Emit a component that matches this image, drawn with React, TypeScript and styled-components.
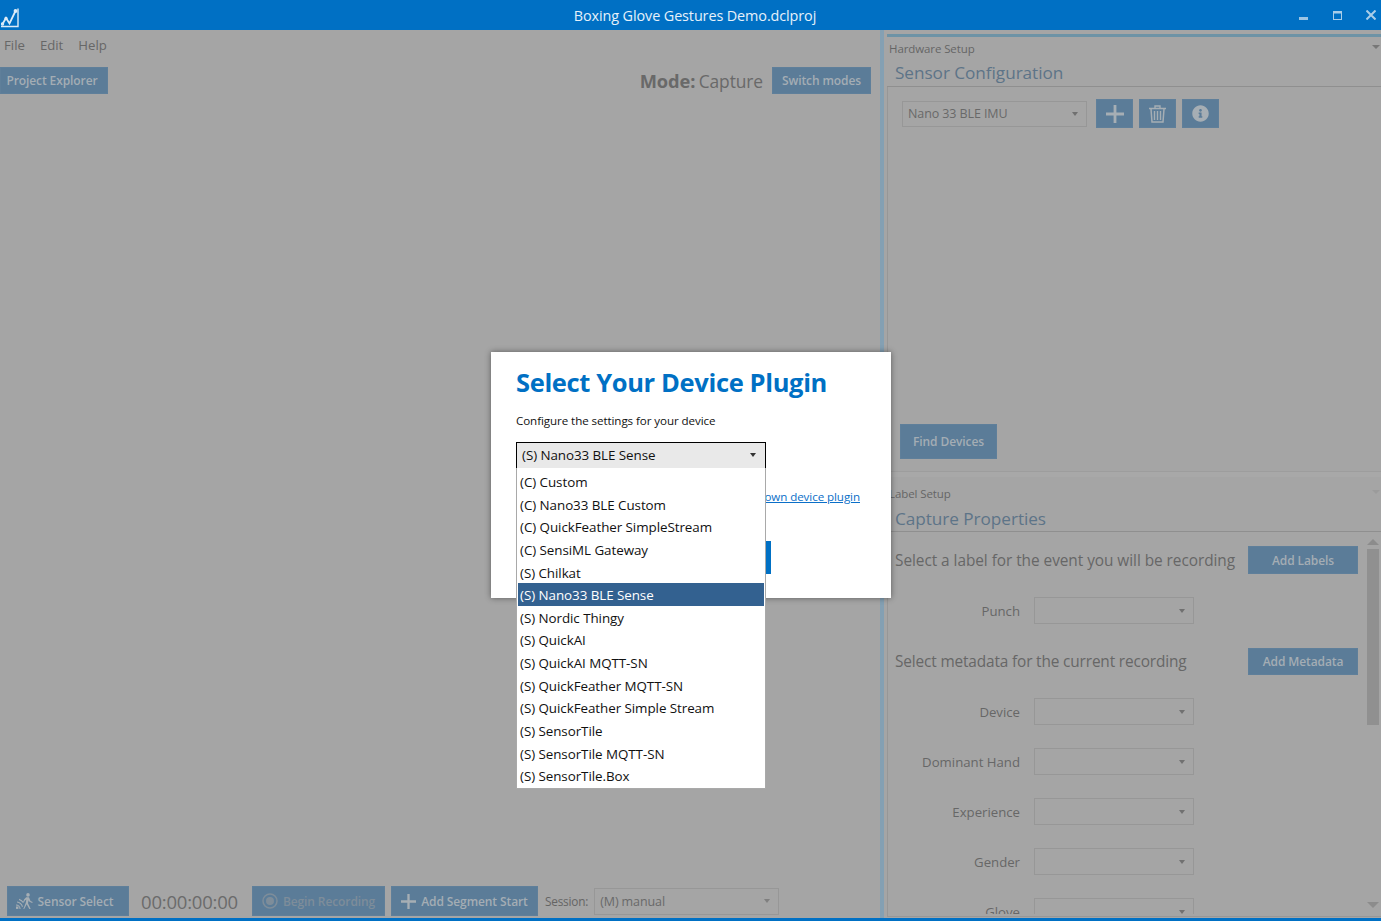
import React from "react";
import styled, { createGlobalStyle } from "styled-components";
import { FaInfoCircle } from "react-icons/fa";

const Global = createGlobalStyle`
  html, body { margin: 0; padding: 0; height: 100%; background: #a5a5a5; overflow: hidden; }
  body { font-family: "Open Sans", "Noto Sans", "Liberation Sans", sans-serif; }
  * { box-sizing: border-box; }
`;

const Window = styled.div`
  width: 1381px; height: 921px; display: flex; flex-direction: column; position: relative;
  background: #a5a5a5; color: #6b6b6b; overflow: hidden; border-bottom: 3px solid #0070c4;
`;
const TitleBar = styled.header`
  height: 30px; flex: none; background: #0070c4; display: grid; grid-template-columns: 1fr auto 1fr; align-items: center;
  color: #e6f1fa; font-size: 14.4px; letter-spacing: -0.1px; padding-left: 1px;
`;
const TitleText = styled.span`
  margin-left: 8px;
`;
const WinControls = styled.div`
  display: flex; justify-content: flex-end; align-items: center; gap: 24px; padding-right: 5px;
`;
const Body = styled.div`
  flex: 1; display: flex; min-height: 0;
`;
const LeftPane = styled.main`
  width: 880px; flex: none; display: flex; flex-direction: column; min-height: 0;
`;
const MenuBar = styled.nav`
  height: 30px; flex: none; display: flex; align-items: center; gap: 15px; padding: 0 0 0 4px; font-size: 13.2px; color: #676767;
`;
const TopRow = styled.div`
  display: flex; justify-content: space-between; align-items: center; margin-top: 7px; padding-right: 9px;
`;
const Btn = styled.button<{ $w?: number; $h?: number; $muted?: boolean; $pr?: number }>`
  display: inline-flex; align-items: center; justify-content: center; gap: 5px; padding: 0 ${(p) => p.$pr ?? 0}px 0 0;
  width: ${(p) => (p.$w ? p.$w + "px" : "auto")}; height: ${(p) => p.$h ?? 27}px;
  background: #5b7c98; border: 1px solid #5f7f9a; color: ${(p) => (p.$muted ? "#7e8d9a" : "#a4adb4")};
  font: 600 12px "Open Sans", "Noto Sans", sans-serif; letter-spacing: -0.1px;
`;
const ModeWrap = styled.div`
  display: flex; align-items: center; gap: 9px;
`;
const ModeText = styled.div`
  font-size: 17.4px; color: #696969; letter-spacing: -0.1px; word-spacing: -1px;
  b { font-weight: 700; font-size: 18.3px; }
`;
const Spacer = styled.div`
  flex: 1;
`;
const BottomBar = styled.div`
  display: flex; align-items: center; padding: 0 0 2px 7px; height: 32px; flex: none;
`;
const Timer = styled.span`
  font: 18.5px "Open Sans", sans-serif; color: #6b6b6b; width: 123px; padding-left: 12px; letter-spacing: -0.2px; white-space: nowrap;
`;
const BarGap = styled.span`
  width: 6px;
`;
const SessionLabel = styled.span`
  font-size: 11.8px; color: #646464; margin: 0 6px 0 7px; letter-spacing: -0.2px;
`;
const Combo = styled.div<{ $w: number; $h?: number }>`
  width: ${(p) => p.$w}px; height: ${(p) => p.$h ?? 27}px; display: flex; align-items: center; justify-content: space-between;
  border: 1px solid #979797;
  padding: 0 8px 0 5px; font-size: 12.5px; color: #696969; flex: none; letter-spacing: -0.1px;
`;
const Caret = styled.span<{ $c?: string }>`
  width: 0; height: 0; border-left: 3.5px solid transparent; border-right: 3.5px solid transparent;
  border-top: 4px solid ${(p) => p.$c ?? "#707070"};
`;
const Splitter = styled.div`
  width: 4px; flex: none; background: #84a0b3;
`;
const RightPane = styled.aside`
  flex: 1; display: flex; flex-direction: column; padding-left: 3px; min-width: 0; min-height: 0;
`;
const TopSection = styled.section`
  height: 441px; flex: none; display: flex; flex-direction: column; padding-top: 4px;
`;
const AccentLine = styled.div`
  height: 3px; background: #6d93a6; flex: none;
`;
const SectionHead = styled.div<{ $mt?: number }>`
  position: relative; height: 17px; margin-top: ${(p) => p.$mt ?? 3}px; padding-left: 2px; font-size: 11.5px; color: #656565; line-height: 17px; letter-spacing: -0.1px; flex: none;
`;
const HeadCaret = styled.span<{ $c?: string }>`
  position: absolute; right: 1px; top: 5px; width: 0; height: 0; border-left: 4px solid transparent; border-right: 4px solid transparent; border-top: 4px solid ${(p) => p.$c ?? "#777"};
`;
const SectionTitle = styled.h2<{ $pt: number }>`
  margin: 0; height: 30px; padding: ${(p) => p.$pt}px 0 0 8px; font-size: 17.2px; font-weight: 400; color: #5d7488; line-height: 28px; flex: none; letter-spacing: -0.05px; border-bottom: 1px solid #8f8f8f;
`;
const ConfigBody = styled.div`
  flex: 1; border-left: 1px solid #979797; padding: 12px 0 12px 12px; display: flex; flex-direction: column; justify-content: space-between;
`;
const ConfigRow = styled.div`
  display: flex; align-items: center; gap: 6px; padding-left: 2px;
`;
const IconBtn = styled(Btn)<{ $first?: boolean }>`
  color: #a6aeb4; margin-left: ${(p) => (p.$first ? 3 : 0)}px;
`;
const Grip = styled.div`
  height: 6px; flex: none; background: #a8a8a8; border-top: 1px solid #9d9d9d;
`;
const BottomSection = styled.section`
  flex: 1; display: flex; flex-direction: column; min-height: 0; padding-bottom: 1px;
`;
const PropsBody = styled.div`
  flex: 1; min-height: 0; border-left: 1px solid #979797; display: flex; overflow: hidden; border-bottom: 1px solid #979797;
`;
const PropsScroll = styled.div`
  flex: 1; padding: 14px 7px 0 7px; margin-bottom: 2px; overflow: hidden; min-width: 0;
`;
const HeadRow = styled.div<{ $mb: number; $ls?: number }>`
  display: flex; justify-content: space-between; align-items: center; height: 28px; margin-bottom: ${(p) => p.$mb}px;
  font-size: 15.4px; color: #676767; letter-spacing: ${(p) => p.$ls ?? -0.05}px;
`;
const FieldRow = styled.div`
  display: grid; grid-template-columns: 125px 160px; column-gap: 14px; align-items: center; height: 27px; margin-bottom: 23px;
  font-size: 13.2px; color: #676767; text-align: right;
`;
const Scrollbar = styled.div`
  width: 16px; flex: none; display: flex; flex-direction: column; align-items: center; padding-top: 7px;
`;
const ScrollUp = styled.span`
  width: 0; height: 0; border-left: 6px solid transparent; border-right: 6px solid transparent; border-bottom: 6px solid #8c8c8c;
`;
const ScrollThumb = styled.div`
  width: 12px; height: 176px; margin-top: 4px; background: #909090;
`;
const ScrollDown = styled.span`
  margin-top: auto; margin-bottom: 8px; width: 0; height: 0; border-left: 6px solid transparent; border-right: 6px solid transparent; border-top: 6px solid #8c8c8c;
`;

const Dialog = styled.div`
  position: absolute; left: 491px; top: 352px; width: 400px; height: 246px; background: #fff; padding: 12px 25px 0;
  box-shadow: 0 0 6px rgba(0,0,0,0.45); display: flex; flex-direction: column;
`;
const DialogTitle = styled.h1`
  margin: 0; font-size: 25.5px; line-height: 37px; font-weight: 700; color: #0070c4; letter-spacing: -0.36px; white-space: nowrap;
`;
const DialogText = styled.p`
  margin: 11px 0 0; font-size: 11.6px; line-height: 18px; color: #111; letter-spacing: -0.08px;
`;
const SelectWrap = styled.div`
  position: relative; width: 250px; margin-top: 12px; height: 27px; flex: none;
`;
const SelectBox = styled.div`
  height: 27px; background: #e9e9e9; border: 1px solid #000; display: flex; align-items: center; justify-content: space-between;
  padding: 0 9px 1px 5px; font-size: 13.4px; color: #111; letter-spacing: -0.07px;
`;
const List = styled.ul`
  position: absolute; left: 0; top: 26px; width: 250px; margin: 0; padding: 2px 1px 0; list-style: none; background: #fff; border: 1px solid #a9a9a9; border-top: 0; height: 321px; z-index: 3;
`;
const Item = styled.li<{ $sel?: boolean }>`
  height: 22.65px; line-height: 24px; padding-left: 2px; font-size: 13.4px; letter-spacing: -0.06px; white-space: nowrap;
  color: ${(p) => (p.$sel ? "#fff" : "#111")}; background: ${(p) => (p.$sel ? "#336190" : "transparent")};
`;
const DeviceLink = styled.a`
  align-self: flex-end; margin: 20px 6px 0 0; font-size: 11.6px; line-height: 16px; color: #0b6fc8; text-decoration: underline; letter-spacing: -0.08px;
`;
const PrimaryBtn = styled.div`
  align-self: flex-start; margin: 36px 0 0 100px; width: 155px; height: 33px; background: #0070c4;
`;

const items = ["(C) Custom","(C) Nano33 BLE Custom","(C) QuickFeather SimpleStream","(C) SensiML Gateway","(S) Chilkat","(S) Nano33 BLE Sense","(S) Nordic Thingy","(S) QuickAI","(S) QuickAI MQTT-SN","(S) QuickFeather MQTT-SN","(S) QuickFeather Simple Stream","(S) SensorTile","(S) SensorTile MQTT-SN","(S) SensorTile.Box"];
const fieldsA = ["Device","Dominant Hand","Experience","Gender","Glove"];

const Logo = () => (
  <svg width="20" height="24" viewBox="0 0 20 24" fill="none" stroke="#dcebf7" strokeWidth="1.4" style={{ display: "block", marginTop: 1 }}>
    <path d="M17 4.5V22.5H0" />
    <path d="M1.5 20 5 14l3.5 5.5L14.5 7" strokeWidth="1.8" />
    <circle cx="1.5" cy="20" r="1" fill="#dcebf7" />
    <circle cx="5" cy="14.5" r="1" fill="#dcebf7" />
    <circle cx="14.5" cy="7" r="1.2" fill="#dcebf7" />
  </svg>
);
const Plus = ({ s = 18, c = "#a6aeb4" }: { s?: number; c?: string }) => (
  <svg width={s} height={s} viewBox="0 0 18 18"><path d="M7.6 0h2.8v7.6H18v2.8h-7.6V18H7.6v-7.6H0V7.6h7.6z" fill={c} /></svg>
);
const Trash = () => (
  <svg width="17" height="18" viewBox="0 0 17 18" fill="none" stroke="#a6aeb4">
    <path d="M0 3.5h17M6 3V1h5v2" strokeWidth="1.4" />
    <path d="M2 4l1 13h11l1-13" strokeWidth="1.5" />
    <path d="M5.5 6v9M8.5 6v9M11.5 6v9" strokeWidth="1.4" />
  </svg>
);
const Walker = () => (
  <svg width="17" height="16" viewBox="0 0 17 16" fill="#a6aeb4">
    <circle cx="12" cy="1.9" r="1.8" />
    <path d="M10.2 4.3h2.8l1.5 3.6 2.2 1.1-.5 1-2.8-1.3-.8-1.4-.6 2.9 2.7 5.8h-1.4l-2.6-4.8-2.5 4.8H7.3l2.5-6.3.5-3.1-1.4.8-1 2.2-.9-.4 1.2-2.9z" />
    <rect x="0" y="13.5" width="2.4" height="2.4" />
    <path d="M0 11.4a4.6 4.6 0 0 1 4.6 4.6H3.5A3.5 3.5 0 0 0 0 12.5z" />
    <path d="M1 8.4A7.4 7.4 0 0 1 7 13.4l-1 .6A6.2 6.2 0 0 0 1 9.6z" />
    <path d="M3 5.8a10 10 0 0 1 4.6 3.2l-.6 1a9 9 0 0 0-4-2.9z" />
  </svg>
);
const RecordIcon = () => (
  <svg width="16" height="16" viewBox="0 0 16 16"><circle cx="8" cy="8" r="7" fill="none" stroke="#7e8d9a" strokeWidth="1.5" /><circle cx="8" cy="8" r="4" fill="#7e8d9a" /></svg>
);

export default function App() {
  return (
    <>
      <Global />
      <Window>
        <TitleBar>
          <Logo />
          <TitleText>Boxing Glove Gestures Demo.dclproj</TitleText>
          <WinControls>
            <svg width="10" height="10" viewBox="0 0 10 10"><rect x="0" y="7" width="9" height="3" fill="#9cc5e4" /></svg>
            <svg width="9" height="9" viewBox="0 0 9 9" fill="none" stroke="#a9cde8"><rect x=".5" y=".5" width="8" height="8" /><rect x="0" y="0" width="9" height="2.5" fill="#a9cde8" stroke="none" /></svg>
            <svg width="10" height="10" viewBox="0 0 10 10" stroke="#a9cde8" strokeWidth="2"><path d="M.5.5l9 9M9.5.5l-9 9" /></svg>
          </WinControls>
        </TitleBar>
        <Body>
          <LeftPane>
            <MenuBar><span>File</span><span>Edit</span><span>Help</span></MenuBar>
            <TopRow>
              <Btn $w={108} $pr={4}>Project Explorer</Btn>
              <ModeWrap>
                <ModeText><b>Mode:</b> Capture</ModeText>
                <Btn $w={99}>Switch modes</Btn>
              </ModeWrap>
            </TopRow>
            <Spacer />
            <BottomBar>
              <Btn $w={122} $h={30} $pr={7}><Walker />Sensor Select</Btn>
              <Timer>00:00:00:00</Timer>
              <Btn $w={133} $h={30} $muted><RecordIcon />Begin Recording</Btn>
              <BarGap />
              <Btn $w={147} $h={30}><Plus s={15} />Add Segment Start</Btn>
              <SessionLabel>Session:</SessionLabel>
              <Combo $w={185}>(M) manual<Caret $c="#7f7f7f" /></Combo>
            </BottomBar>
          </LeftPane>
          <Splitter />
          <RightPane>
            <TopSection>
              <AccentLine />
              <SectionHead $mt={3}>Hardware Setup<HeadCaret /></SectionHead>
              <SectionTitle $pt={2}>Sensor Configuration</SectionTitle>
              <ConfigBody>
                <ConfigRow>
                  <Combo $w={185} $h={26}>Nano 33 BLE IMU<Caret /></Combo>
                  <IconBtn $w={37} $h={29} $first><Plus /></IconBtn>
                  <IconBtn $w={37} $h={29}><Trash /></IconBtn>
                  <IconBtn $w={37} $h={29}><FaInfoCircle size={17} /></IconBtn>
                </ConfigRow>
                <Btn $w={97} $h={35}>Find Devices</Btn>
              </ConfigBody>
            </TopSection>
            <Grip />
            <BottomSection>
              <SectionHead $mt={8}>Label Setup<HeadCaret $c="#9b9b9b" /></SectionHead>
              <SectionTitle $pt={3}>Capture Properties</SectionTitle>
              <PropsBody>
                <PropsScroll>
                  <HeadRow $mb={23}>Select a label for the event you will be recording<Btn $w={110} $h={28}>Add Labels</Btn></HeadRow>
                  <FieldRow><span>Punch</span><Combo $w={160}><span /><Caret /></Combo></FieldRow>
                  <HeadRow $mb={23} $ls={-0.15}>Select metadata for the current recording<Btn $w={110} $h={27}>Add Metadata</Btn></HeadRow>
                  {fieldsA.map((f) => (
                    <FieldRow key={f}><span>{f}</span><Combo $w={160}><span /><Caret /></Combo></FieldRow>
                  ))}
                </PropsScroll>
                <Scrollbar><ScrollUp /><ScrollThumb /><ScrollDown /></Scrollbar>
              </PropsBody>
            </BottomSection>
          </RightPane>
        </Body>
        <Dialog>
          <DialogTitle>Select Your Device Plugin</DialogTitle>
          <DialogText>Configure the settings for your device</DialogText>
          <SelectWrap>
            <SelectBox>(S) Nano33 BLE Sense<Caret $c="#333" /></SelectBox>
            <List>
              {items.map((t) => <Item key={t} $sel={t === "(S) Nano33 BLE Sense"}>{t}</Item>)}
            </List>
          </SelectWrap>
          <DeviceLink>Build your own device plugin</DeviceLink>
          <PrimaryBtn />
        </Dialog>
      </Window>
    </>
  );
}
